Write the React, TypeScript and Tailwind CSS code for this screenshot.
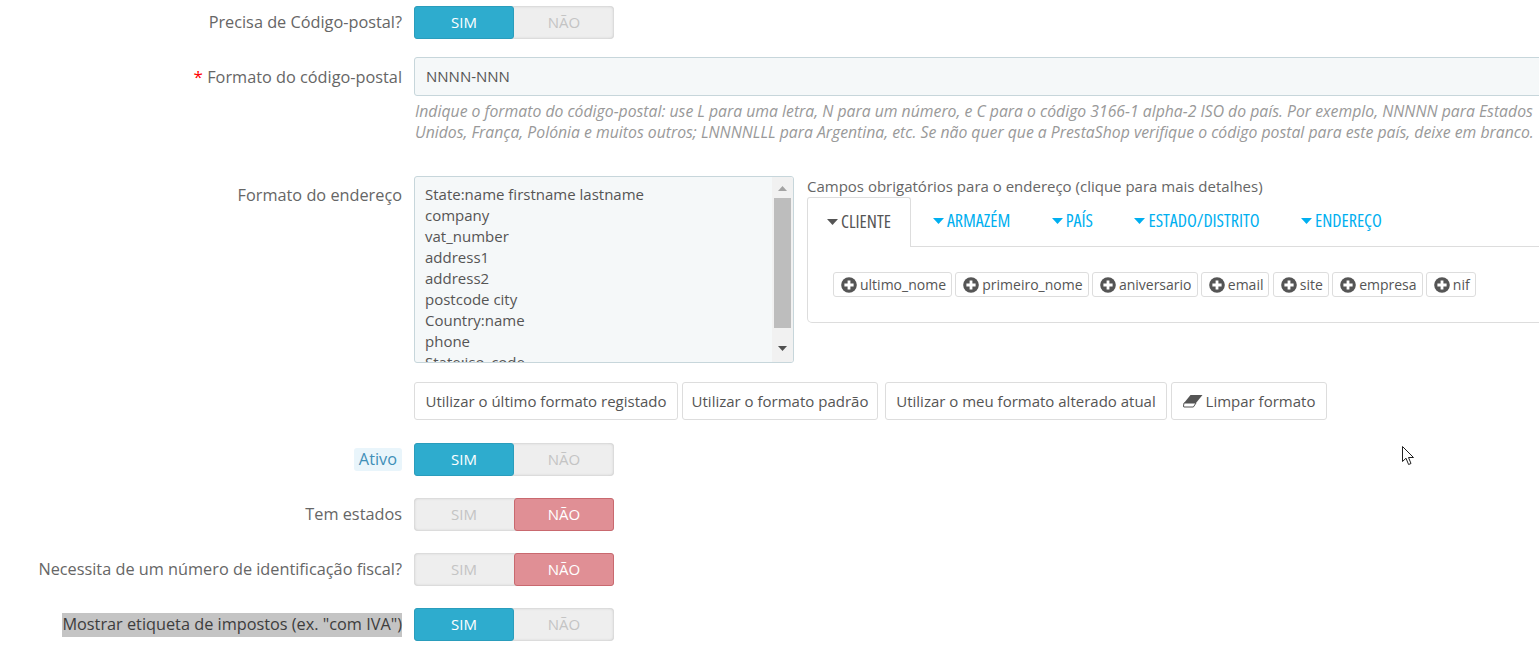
import React from 'react';

const font = "font-['Open_Sans',sans-serif]";

const Toggle: React.FC<{ on: boolean }> = ({ on }) => (
  <div className="flex w-[200px] h-[33px] rounded-[4px] bg-[#eeeeee] shadow-[inset_0_0_3px_rgba(0,0,0,0.22)] text-[15px] font-medium text-[#c4c4c4]">
    <div className={on ? 'w-[100px] flex items-center justify-center rounded-[3px] bg-[#2eacce] border border-[#2a9dbc] text-white' : 'w-[100px] flex items-center justify-center'}>
      SIM
    </div>
    <div className={on ? 'w-[100px] flex items-center justify-center' : 'w-[100px] flex items-center justify-center rounded-[3px] bg-[#e08f95] border border-[#c9696f] text-white'}>
      NÃO
    </div>
  </div>
);

const Caret: React.FC<{ color: string }> = ({ color }) => (
  <svg width="11" height="6" viewBox="0 0 11 6" className="mr-[3px] shrink-0">
    <path d="M0 0h11L5.5 6z" fill={color} />
  </svg>
);

const PlusCircle = () => (
  <svg width="16" height="16" viewBox="0 0 16 16" className="mr-[3px] shrink-0">
    <circle cx="8" cy="8" r="7.8" fill="#555555" />
    <path d="M6.6 3.4h2.8v3.2h3.2v2.8h-3.2v3.2H6.6V9.4H3.4V6.6h3.2z" fill="#ffffff" />
  </svg>
);

const Eraser = () => (
  <svg width="20" height="14" viewBox="0 0 20 14" className="mr-[3px] shrink-0">
    <path d="M7.5 1h12L13 9H1z" fill="#555555" />
    <path d="M1 9h12l-2.6 4H0.8L0.5 12z" fill="#ffffff" stroke="#555555" strokeWidth="1" />
  </svg>
);

const tabs = ['ARMAZÉM', 'PAÍS', 'ESTADO/DISTRITO', 'ENDEREÇO'];
const tags = ['ultimo_nome', 'primeiro_nome', 'aniversario', 'email', 'site', 'empresa', 'nif'];
const lines = ['State:name firstname lastname', 'company', 'vat_number', 'address1', 'address2', 'postcode city', 'Country:name', 'phone', 'State:iso_code'];

const Row: React.FC<{ label: React.ReactNode; className: string; children: React.ReactNode }> = ({ label, className, children }) => (
  <div className={`flex ${className}`}>
    <div className="w-[402px] shrink-0 text-right text-[16.3px] text-[#666666] whitespace-nowrap">{label}</div>
    <div className="ml-[12px] w-[1200px] shrink-0">{children}</div>
  </div>
);

const btn = 'h-[38px] flex items-center justify-center border border-[#dddddd] rounded-[3px] bg-white text-[15px] text-[#555555]';

export default function App() {
  return (
    <div className={`relative w-[1539px] h-[651px] overflow-hidden bg-white ${font}`}>
      <div className="pt-[6px]">
        <Row label={<span className="leading-[33px]">Precisa de Código-postal?</span>} className="mb-[18px]">
          <Toggle on />
        </Row>

        <Row
          label={
            <span className="leading-[39px]">
              <span className="text-[#f00] text-[17px]">* </span>Formato do código-postal
            </span>
          }
          className="mb-[16px]"
        >
          <div className="h-[39px] flex items-center pl-[11px] border border-[#c7d6db] rounded-[3px] bg-[#f5f8f9] text-[15px] text-[#555555]">NNNN-NNN</div>
          <p className="mt-[5px] ml-[1px] h-[59px] w-[1135px] text-[15.78px] leading-[21px] italic text-[#999999] whitespace-nowrap">
            Indique o formato do código-postal: use L para uma letra, N para um número, e C para o código 3166-1 alpha-2 ISO do país. Por exemplo, NNNNN para Estados
            <br />
            Unidos, França, Polónia e muitos outros; LNNNNLLL para Argentina, etc. Se não quer que a PrestaShop verifique o código postal para este país, deixe em branco.
          </p>
        </Row>

        <Row label={<span className="block pt-[7px]">Formato do endereço</span>} className="mb-[23px]">
          <div className="flex">
            <div className="relative w-[380px] h-[187px] shrink-0 overflow-hidden border border-[#c7d6db] rounded-[3px] bg-[#f5f8f9] pl-[10px] pt-[7px] text-[15px] leading-[21px] text-[#555555]">
              {lines.map((line) => (
                <div key={line}>{line}</div>
              ))}
              {/* scrollbar */}
              <div className="absolute top-0 right-0 bottom-0 w-[21px] bg-[#f1f1f1] flex flex-col items-center">
                <svg width="9" height="5" viewBox="0 0 9 5" className="mt-[9px]">
                  <path d="M4.5 0L9 5H0z" fill="#a3a3a3" />
                </svg>
                <div className="mt-[7px] w-[17px] h-[130px] bg-[#bdbdbd]" />
                <svg width="9" height="5" viewBox="0 0 9 5" className="mt-[18px]">
                  <path d="M0 0h9L4.5 5z" fill="#505050" />
                </svg>
              </div>
            </div>
            <div className="ml-[13px] w-[760px] shrink-0">
              <div className="h-[21px] text-[15px] leading-[21px] text-[#666666]">Campos obrigatórios para o endereço (clique para mais detalhes)</div>
              <div className="flex h-[50px] border-b border-[#dddddd]">
                <div className="h-[50px] pb-[2px] px-[19px] flex items-center border border-b-0 border-[#dddddd] rounded-t-[3px] bg-white text-[#555555] text-[18px] [font-stretch:75%]">
                  <Caret color="#555555" />
                  CLIENTE
                </div>
                <div className="flex gap-[41.5px] pl-[22px]">
                  {tabs.map((tab) => (
                    <div key={tab} className="h-[49px] pb-[2px] flex items-center text-[#00aff0] text-[18px] [font-stretch:75%]">
                      <Caret color="#00aff0" />
                      {tab}
                    </div>
                  ))}
                </div>
              </div>
              <div className="h-[76px] border border-t-0 border-[#dddddd] rounded-b-[5px] pl-[25px] pt-[25px] flex gap-[3.3px] items-start">
                {tags.map((tag) => (
                  <div key={tag} className="h-[25px] flex items-center pl-[7px] pr-[5px] border border-[#dddddd] rounded-[3px] text-[14px] text-[#555555]">
                    <PlusCircle />
                    {tag}
                  </div>
                ))}
              </div>
            </div>
          </div>
          <div className="flex mt-[19px]">
            <div className={`${btn} w-[264px]`}>Utilizar o último formato registado</div>
            <div className={`${btn} w-[196px] ml-[4px]`}>Utilizar o formato padrão</div>
            <div className={`${btn} w-[282px] ml-[7px]`}>Utilizar o meu formato alterado atual</div>
            <div className={`${btn} w-[156px] ml-[4px]`}>
              <Eraser />
              Limpar formato
            </div>
          </div>
        </Row>

        <Row
          label={
            <span className="inline-block mt-[5px] h-[23px] leading-[22px] px-[5px] rounded-[3px] bg-[#e9f5fb] text-[#3f8fb8]">Ativo</span>
          }
          className="mb-[22px]"
        >
          <Toggle on />
        </Row>
        <Row label={<span className="leading-[33px]">Tem estados</span>} className="mb-[22px]">
          <Toggle on={false} />
        </Row>
        <Row label={<span className="leading-[33px]">Necessita de um número de identificação fiscal?</span>} className="mb-[22px]">
          <Toggle on={false} />
        </Row>
        <Row
          label={<span className="inline-block mt-[5px] h-[24px] leading-[23px] bg-[#c4c4c4] text-[#3d3d3d]">Mostrar etiqueta de impostos (ex. "com IVA")</span>}
          className=""
        >
          <Toggle on />
        </Row>
      </div>

      {/* mouse pointer */}
      <svg width="13" height="20" viewBox="0 0 13 20" className="absolute left-[1402px] top-[446px]">
        <path d="M0.5 0.5V15.5L4 12.2L6.6 18.5L9 17.5L6.5 11.5H11.5z" fill="#ffffff" stroke="#222222" strokeWidth="1" />
      </svg>
    </div>
  );
}
